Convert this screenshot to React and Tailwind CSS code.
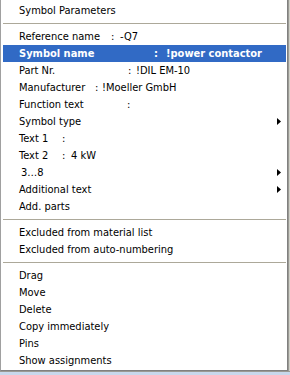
const font = { fontFamily: '"DejaVu Sans Condensed", "Liberation Sans", Arial, sans-serif' };

const Arrow = () => (
  <svg width="4" height="7" viewBox="0 0 4 7" className="ml-auto mr-[5px]">
    <polygon points="0,0 4,3.5 0,7" fill="#000" />
  </svg>
);

const Separator = () => (
  <div className="h-[9px] flex items-center">
    <div className="w-full h-px bg-[#aca899]" />
  </div>
);

const Item = ({ children, arrow, active }) => (
  <div
    className={
      active
        ? 'flex h-[17px] items-center pl-4 bg-[#316ac5] text-white font-bold'
        : 'flex h-[17px] items-center pl-4 text-black'
    }
  >
    {children}
    {arrow && <Arrow />}
  </div>
);

export default function App() {
  return (
    <div className="w-[290px] h-[375px] bg-[#b8b8b0] flex flex-col overflow-hidden" style={font}>
      <div className="flex flex-1">
        <div className="w-[288px] h-[371px] bg-white border-l border-l-[#a0a0a0] border-r border-r-[#808080] border-b border-b-[#808080] pt-[2px] pl-[2px] pr-px text-[11px] leading-none whitespace-pre">
          <Item>Symbol Parameters</Item>
          <Separator />
          <Item>
            <span className="w-[92px]">Reference name</span>
            <span className="w-[9px]">:</span>
            <span>-Q7</span>
          </Item>
          <Item active>
            <span className="w-[135px]">Symbol name</span>
            <span className="w-[12px]">:</span>
            <span>!power contactor</span>
          </Item>
          <Item>
            <span className="w-[109px]">Part Nr.</span>
            <span className="w-[8px]">:</span>
            <span>!DIL EM-10</span>
          </Item>
          <Item>
            <span className="w-[76px]">Manufacturer</span>
            <span className="w-[7px]">:</span>
            <span>!Moeller GmbH</span>
          </Item>
          <Item>
            <span className="w-[108px]">Function text</span>
            <span>:</span>
          </Item>
          <Item arrow>Symbol type</Item>
          <Item>
            <span className="w-[43px]">Text 1</span>
            <span>:</span>
          </Item>
          <Item>
            <span className="w-[43px]">Text 2</span>
            <span className="w-[9px]">:</span>
            <span>4 kW</span>
          </Item>
          <Item arrow>
            <span className="pl-[2px]">3…8</span>
          </Item>
          <Item arrow>Additional text</Item>
          <Item>Add. parts</Item>
          <Separator />
          <Item>Excluded from material list</Item>
          <Item>Excluded from auto-numbering</Item>
          <Separator />
          <Item>Drag</Item>
          <Item>Move</Item>
          <Item>Delete</Item>
          <Item>Copy immediately</Item>
          <Item>Pins</Item>
          <Item>Show assignments</Item>
        </div>
        <div className="flex-1 bg-[#d0d0c8] border-l border-l-[#9a9a94]" />
      </div>
      <div className="h-[4px] bg-[#c8d8ec] border-t border-t-[#9a9a94]" />
    </div>
  );
}
